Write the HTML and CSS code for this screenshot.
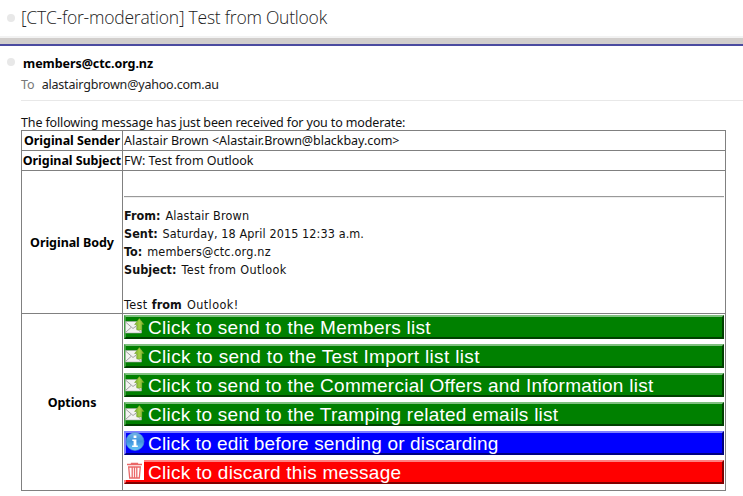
FILE: index.html
```html
<!DOCTYPE html>
<html lang="en">
<head>
<meta charset="utf-8">
<title>Test from Outlook</title>
<link rel="stylesheet" href="styles.css">
</head>
<body>
<svg class="defs" width="0" height="0">
  <defs>
    <linearGradient id="arrow" x1="0" y1="0" x2="1" y2="0"><stop offset="0" stop-color="#79ae25"/><stop offset=".5" stop-color="#a4d046"/><stop offset="1" stop-color="#79ae25"/></linearGradient>
    <linearGradient id="ball" x1="0" y1="0" x2="0" y2="1"><stop offset="0" stop-color="#74b4e6"/><stop offset=".5" stop-color="#3f94de"/><stop offset="1" stop-color="#6cc8f8"/></linearGradient>
  </defs>
  <symbol id="mail" viewBox="0 0 20 20">
    <path d="M.5 4.500H16.500V16H.5Z" fill="#f3f3f1" stroke="#aaa" stroke-width=".6"/>
    <path d="M.5 5L8 11.500L16 5M.5 15.500L6 10.500M16 15.500L11 10.500" fill="none" stroke="#999" stroke-width=".9"/>
    <path d="M14.300 1.500L19 7.500H16.800V13H11.800V7.500H9.600Z" fill="url(#arrow)" stroke="#6b9d22" stroke-width=".5"/>
  </symbol>
  <symbol id="info" viewBox="0 0 20 20">
    <circle cx="10" cy="9.500" r="9" fill="url(#ball)" stroke="#4b91d2" stroke-width=".6"/>
    <path d="M8.600 3.500H11.400V6H8.600ZM7.300 7.500H11.400V13.500H12.800V15H7.100V13.500H8.600V9H7.300Z" fill="#fff"/>
  </symbol>
  <symbol id="bin" viewBox="0 0 20 20">
    <path d="M0 0H20V20H0Z" fill="#fff"/>
    <path d="M3 4.500H18M7.500 4V3.300H13.500V4M4.700 7L5.700 18H15.300L16.300 7ZM8.200 7V17.500M10.500 7V17.500M12.800 7V17.500" fill="none" stroke="#ea6868" stroke-width="1.300"/>
  </symbol>
</svg>
<header class="subject"><i class="dot"></i><h1>[CTC-for-moderation] Test from Outlook</h1></header>
<div class="divider"></div>
<main>
  <div class="from"><i class="dot"></i><b>members@ctc.org.nz</b></div>
  <div class="to"><span>To</span><span class="address">alastairgbrown@yahoo.com.au</span></div>
  <p class="intro">The following message has just been received for you to moderate:</p>
  <section class="details">
    <div class="label">Original Sender</div><div class="value line">Alastair Brown &lt;Alastair.Brown@blackbay.com&gt;</div>
    <div class="label">Original Subject</div><div class="value line">FW: Test from Outlook</div>
    <div class="label">Original Body</div>
    <div class="value message">
      <hr>
      <p class="m-from"><b>From:</b> Alastair Brown</p>
      <p class="m-sent"><b>Sent:</b> Saturday, 18 April 2015 12:33 a.m.</p>
      <p class="m-to"><b>To:</b> members@ctc.org.nz</p>
      <p class="m-subject"><b>Subject:</b> Test from Outlook</p>
      <p class="last">Test <b>from</b> Outlook!</p>
    </div>
    <div class="label low">Options</div>
    <div class="value options">
      <a class="send"><svg><use href="#mail"/></svg><span>Click to send to the Members list</span></a>
      <a class="send import"><svg><use href="#mail"/></svg><span>Click to send to the Test Import list list</span></a>
      <a class="send"><svg><use href="#mail"/></svg><span>Click to send to the Commercial Offers and Information list</span></a>
      <a class="send"><svg><use href="#mail"/></svg><span>Click to send to the Tramping related emails list</span></a>
      <a class="edit"><svg><use href="#info"/></svg><span>Click to edit before sending or discarding</span></a>
      <a class="discard"><svg><use href="#bin"/></svg><span>Click to discard this message</span></a>
    </div>
  </section>
</main>
</body>
</html>
```
FILE: styles.css
```css
* { box-sizing: border-box; }
body { margin: 0; height: 496px; overflow: hidden; background: #fff; color: #111; font: 12.5px/18px "Noto Sans", "Open Sans", sans-serif; white-space: nowrap; }
.defs { display: block; }
h1, p { margin: 0; }
.dot { flex: none; width: 8px; height: 8px; border-radius: 50%; background: #e8e8e8; }
.subject { display: flex; align-items: center; height: 36px; padding-left: 7px; }
h1 { margin: -3px 0 0 6px; font: 300 17.5px/24px "Open Sans", "Noto Sans", sans-serif; letter-spacing: -.23px; color: #222; }
.divider { height: 10px; border-top: 2px solid #f2f2f2; border-bottom: 2px solid #4b4ba0; background: #d1cecc; }
.from { display: flex; align-items: center; height: 34px; padding-left: 7px; }
.from .dot { margin-top: -2px; }
.from b { margin: 2px 0 0 8px; letter-spacing: -.06px; color: #000; }
.to { display: flex; height: 21px; margin-left: 21px; border-bottom: 1px solid #e8e8e8; line-height: 9px; color: #777; }
.address { margin-left: 7px; letter-spacing: -.19px; color: #222; }
.intro { margin: 13px 0 0 21px; height: 16px; letter-spacing: -.14px; }
.details { display: grid; grid-template-columns: 100px 602px; grid-template-rows: 19px 19px 142px 176px; gap: 1px; width: 705px; padding: 1px; margin-left: 21px; background: #808080; }
.label, .value { background: #fff; min-width: 0; }
.label { display: flex; align-items: center; justify-content: center; padding-top: 1px; font-weight: bold; letter-spacing: -.06px; color: #000; }
.low { padding-top: 2px; }
.value { padding-left: 1px; }
.line { padding-top: 1px; letter-spacing: -.04px; }
.message { padding: 25px 1px 0; font: 12.5px/18px "DejaVu Sans Condensed", "DejaVu Sans", sans-serif; }
.message b { margin-right: 1px; letter-spacing: .05px; }
hr { height: 2px; margin: 0 0 9px; border: 0; border-top: 1px solid #999; border-bottom: 1px solid #eee; }
.m-from { letter-spacing: .17px; }
.m-sent { letter-spacing: .1px; }
.m-to { letter-spacing: .2px; }
.m-subject { letter-spacing: .36px; }
.last { margin-top: 17px; letter-spacing: .45px; }
.options { display: flex; flex-direction: column; gap: 5px; padding: 1px; }
.options a { display: flex; height: 24px; border: 2px solid; font: 19px/21px "Liberation Sans", Arial, sans-serif; letter-spacing: .25px; color: #fff; }
.options svg { flex: none; width: 20px; height: 20px; margin-left: -1px; }
.options span { margin-left: 3px; }
.options .import { letter-spacing: .34px; }
.options .send { background: #008000; border-color: #80c080 #004000 #004000 #40a040; }
.options .edit { background: #00f; border-color: #8080ff #000080 #000080 #8080ff; letter-spacing: .17px; }
.options .edit svg { margin-top: -1px; }
.options .discard { background: #f00; border-color: #ff8080 #800000 #800000 #ff8080; }
.options .discard svg { margin: -2px 1px 0 -2px; }
```
